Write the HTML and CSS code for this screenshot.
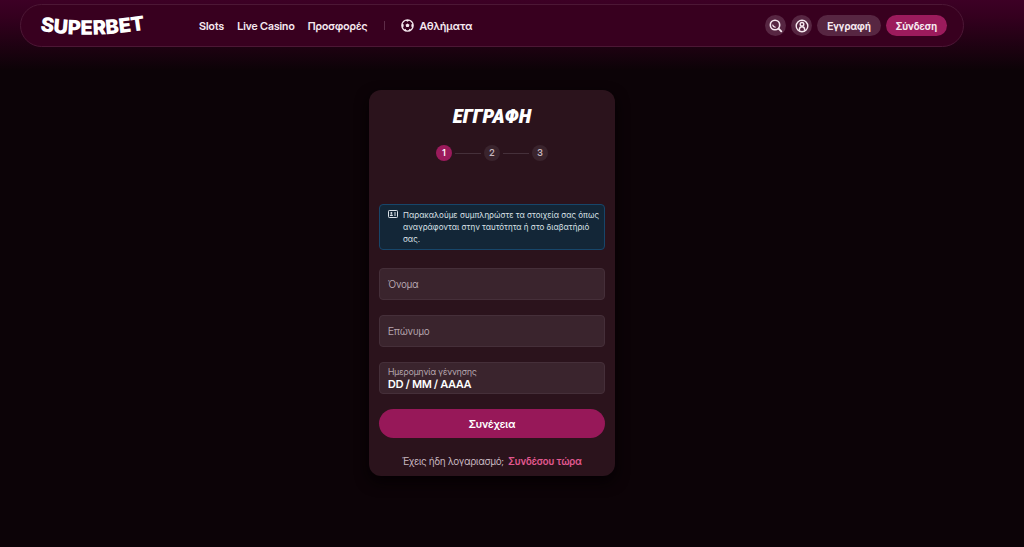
FILE: index.html
```html
<!DOCTYPE html>
<html lang="el">
  <head>
    <meta charset="utf-8" />
    <meta name="viewport" content="width=device-width, initial-scale=1" />

    <title>Εγγραφή</title>

    <link rel="stylesheet" href="styles.css">
  </head>

  <body>
    <header class="header">
      <a href="#" class="logo">
        <svg width="108" height="30" viewBox="0 0 108 30">
          <path id="logoCurve" d="M0 20 Q54 29 120 16" fill="none" />
          <text class="logoText"><textPath href="#logoCurve">SUPERBET</textPath></text>
        </svg>
      </a>

      <nav class="nav">
        <a href="#">Slots</a>
        <a href="#">Live Casino</a>
        <a href="#">Προσφορές</a>
        <span class="divider"></span>
        <a href="#" class="sports">
          <svg width="13" height="13" viewBox="0 0 14 14">
            <circle cx="7" cy="7" r="6.1" fill="none" stroke="currentColor" stroke-width="1.4" />
            <path d="M7 4.8 L9.1 6.3 L8.3 8.7 H5.7 L4.9 6.3 Z" fill="currentColor" />
            <path d="M4.2 1.2 L7 2.9 L9.8 1.2 Z M0.9 5 L3 6 L2.6 8.8 L1.2 9.4 Z M13.1 5 L11 6 L11.4 8.8 L12.8 9.4 Z M3.2 12 L4.8 10.6 L6.2 13 Z M10.8 12 L9.2 10.6 L7.8 13 Z" fill="currentColor" />
          </svg>
          Αθλήματα
        </a>
      </nav>

      <div class="actions">
        <button type="button" class="iconButton" aria-label="Αναζήτηση">
          <svg width="14" height="14" viewBox="0 0 14 14" fill="none" stroke="currentColor" stroke-linecap="round">
            <circle cx="6" cy="6" r="4.7" stroke-width="1.6" />
            <path d="M9.6 9.6 L12.3 12.3" stroke-width="1.9" />
            <path d="M3.8 6.1 Q4.1 8 6.1 8.1" stroke-width="1.3" />
          </svg>
        </button>
        <button type="button" class="iconButton" aria-label="Λογαριασμός">
          <svg width="14" height="14" viewBox="0 0 14 14" fill="none" stroke="currentColor" stroke-width="1.4">
            <circle cx="7" cy="7" r="5.8" />
            <circle cx="7" cy="5.3" r="1.8" />
            <path d="M4.4 11.6 V10.2 Q4.6 7.8 7 7.8 Q9.4 7.8 9.6 10.2 V11.6" />
          </svg>
        </button>
        <button type="button" class="pill">Εγγραφή</button>
        <button type="button" class="pill login">Σύνδεση</button>
      </div>
    </header>

    <main class="card">
      <h1>ΕΓΓΡΑΦΗ</h1>

      <ol class="steps">
        <li class="step current">1</li>
        <li class="line"></li>
        <li class="step">2</li>
        <li class="line"></li>
        <li class="step">3</li>
      </ol>

      <div class="notice">
        <svg width="10" height="10" viewBox="0 0 10 10">
          <rect x="0.5" y="1.5" width="9" height="7" rx="0.8" fill="none" stroke="currentColor" />
          <circle cx="3.4" cy="4" r="1" fill="currentColor" />
          <path d="M1.8 7 Q1.9 5.3 3.4 5.3 Q4.9 5.3 5 7 Z" fill="currentColor" />
          <path d="M6 4 H8 M6 6 H8" stroke="currentColor" />
        </svg>
        <p>Παρακαλούμε συμπληρώστε τα στοιχεία σας όπως αναγράφονται στην ταυτότητα ή στο διαβατήριό σας.</p>
      </div>

      <form class="form">
        <div class="field">
          <label for="firstName">Όνομα</label>
          <input type="text" id="firstName" />
        </div>
        <div class="field">
          <label for="lastName">Επώνυμο</label>
          <input type="text" id="lastName" />
        </div>
        <div class="field filled">
          <label for="birthDate">Ημερομηνία γέννησης</label>
          <input type="text" id="birthDate" placeholder="DD / MM / AAAA" />
        </div>
        <button type="submit" class="submit">Συνέχεια</button>
      </form>

      <p class="already">Έχεις ήδη λογαριασμό; <a href="#">Συνδέσου τώρα</a></p>
    </main>
  </body>
</html>
```
FILE: styles.css
```css
* {
  box-sizing: border-box;
}

html {
  min-height: 100%;
  background: linear-gradient(#3d0025 0, #35001f 16px, #0c0307 70px) no-repeat #0c0307;
}

body {
  margin: 0;
  padding: 4px 60px 24px 20px;
  font-family: "Inter Display", Inter, sans-serif;
  font-size: 9px;
  color: #f5e8ef;
}

a {
  color: inherit;
  text-decoration: none;
}

button,
input {
  font-family: inherit;
  border: none;
  margin: 0;
}

button {
  cursor: pointer;
}

svg {
  display: block;
  flex: none;
}

.header {
  display: flex;
  align-items: center;
  height: 43px;
  padding: 0 16px 0 19px;
  border: 1px solid #4c1735;
  border-radius: 22px;
  background-color: #38001f;
}

.logoText {
  font-family: Inter, sans-serif;
  font-size: 20px;
  font-weight: 900;
  fill: white;
}

.nav {
  display: flex;
  align-items: center;
  gap: 13px;
  margin-left: 51px;
  font-size: 11px;
  font-weight: 600;
}

.divider {
  width: 1px;
  height: 9px;
  margin: 0 3px 0 4px;
  background-color: #5e2c48;
}

.sports {
  display: flex;
  align-items: center;
  gap: 5px;
}

.actions {
  display: flex;
  gap: 5px;
  margin-left: auto;
}

.iconButton,
.pill {
  display: flex;
  align-items: center;
  justify-content: center;
  height: 21px;
  border-radius: 11px;
  background-color: #572642;
  color: #f5e8ef;
}

.iconButton {
  width: 21px;
  padding: 0;
}

.pill {
  padding: 0 10px;
  font-size: 10px;
  font-weight: 700;
}

.login {
  background-color: #9b1b5c;
}

.card {
  width: 246px;
  margin: 43px auto 0;
  padding: 14px 10px 8px;
  border-radius: 12px;
  background-color: #2b131c;
  box-shadow: 0 6px 14px #050103;
}

h1 {
  margin: 0;
  font-family: "Roboto Condensed", Roboto, sans-serif;
  font-size: 21px;
  line-height: 24px;
  font-weight: 900;
  font-style: italic;
  text-align: center;
  color: white;
}

.steps {
  display: flex;
  align-items: center;
  justify-content: center;
  gap: 3px;
  margin: 17px 0 43px;
  padding: 0;
  list-style: none;
}

.step {
  width: 16px;
  border-radius: 8px;
  background-color: #3a242d;
  color: #c9b9c1;
  font-weight: 600;
  line-height: 16px;
  text-align: center;
}

.current {
  background-color: #9b1b5c;
  color: white;
}

.line {
  width: 26px;
  height: 1px;
  background-color: #45303a;
}

.notice {
  display: flex;
  gap: 5px;
  padding: 4px 4px 4px 8px;
  border: 1px solid #17466a;
  border-radius: 4px;
  background-color: #132637;
  color: #dbe2e8;
}

.notice p {
  margin: 0;
  font-family: Inter, sans-serif;
  font-size: 8px;
  line-height: 12px;
}

.form {
  display: flex;
  flex-direction: column;
  gap: 15px;
  margin-top: 18px;
}

/* label and input share one cell, the label lies over the empty input */
.field {
  display: grid;
  height: 32px;
  border: 1px solid #452f39;
  border-radius: 4px;
  background-color: #3a242d;
}

.field label,
.field input {
  grid-area: 1 / 1;
}

.field label {
  align-self: center;
  padding: 0 8px;
  font-size: 10px;
  color: #b5a5ad;
}

.field input {
  width: 100%;
  padding: 0 8px;
  background: none;
  font-size: 11px;
  font-weight: 600;
  color: white;
}

.field input::placeholder {
  color: white;
  opacity: 1;
}

.filled label {
  align-self: start;
  padding-top: 3px;
  font-size: 9px;
  line-height: 11px;
}

.filled input {
  padding-top: 11px;
}

.submit {
  height: 29px;
  border-radius: 15px;
  background-color: #971859;
  color: white;
  font-size: 11px;
  font-weight: 600;
}

.already {
  margin: 16px 0 0;
  font-size: 10px;
  line-height: 14px;
  text-align: center;
  color: #c9b9c1;
}

.already a {
  margin-left: 2px;
  font-weight: 600;
  color: #e0588f;
}
```
